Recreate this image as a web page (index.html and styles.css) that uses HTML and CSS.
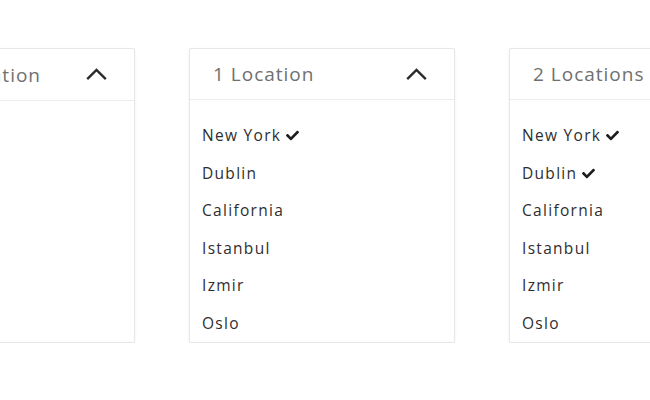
FILE: index.html
```html
<!DOCTYPE html>
<html lang="en">
<head>
    <meta charset="UTF-8">
    <meta name="viewport" content="width=device-width, initial-scale=1.0">
    <title>Location Dropdowns</title>
    <link rel="stylesheet" href="styles.css">
</head>
<body>
    <div class="row">
        <div class="dropdown">
            <div class="head">
                <span class="label">Select Location</span>
                <svg class="chevron" viewBox="0 0 24 14"><path d="M2 12 L12 2 L22 12"/></svg>
            </div>
            <ul class="list"></ul>
        </div>
        <div class="dropdown">
            <div class="head">
                <span class="label">1 Location</span>
                <svg class="chevron" viewBox="0 0 24 14"><path d="M2 12 L12 2 L22 12"/></svg>
            </div>
            <ul class="list">
                <li class="picked">New York <svg class="check" viewBox="0 0 512 512"><path d="M173.9 439.4l-166.4-166.4c-10-10-10-26.2 0-36.2l36.2-36.2c10-10 26.2-10 36.2 0L192 312.7 432.1 72.6c10-10 26.2-10 36.2 0l36.2 36.2c10 10 10 26.2 0 36.2l-294.4 294.4c-10 10-26.2 10-36.2 0z"/></svg></li>
                <li>Dublin</li>
                <li>California</li>
                <li>Istanbul</li>
                <li>Izmir</li>
                <li>Oslo</li>
            </ul>
        </div>
        <div class="dropdown">
            <div class="head">
                <span class="label">2 Locations</span>
                <svg class="chevron" viewBox="0 0 24 14"><path d="M2 12 L12 2 L22 12"/></svg>
            </div>
            <ul class="list">
                <li class="picked">New York <svg class="check" viewBox="0 0 512 512"><path d="M173.9 439.4l-166.4-166.4c-10-10-10-26.2 0-36.2l36.2-36.2c10-10 26.2-10 36.2 0L192 312.7 432.1 72.6c10-10 26.2-10 36.2 0l36.2 36.2c10 10 10 26.2 0 36.2l-294.4 294.4c-10 10-26.2 10-36.2 0z"/></svg></li>
                <li class="picked">Dublin <svg class="check" viewBox="0 0 512 512"><path d="M173.9 439.4l-166.4-166.4c-10-10-10-26.2 0-36.2l36.2-36.2c10-10 26.2-10 36.2 0L192 312.7 432.1 72.6c10-10 26.2-10 36.2 0l36.2 36.2c10 10 10 26.2 0 36.2l-294.4 294.4c-10 10-26.2 10-36.2 0z"/></svg></li>
                <li>California</li>
                <li>Istanbul</li>
                <li>Izmir</li>
                <li>Oslo</li>
            </ul>
        </div>
    </div>
</body>
</html>
```

FILE: styles.css
```css
body{
    margin: 0;
    background-color: #fff;
    font-family: "Open Sans", "Liberation Sans", sans-serif;
    overflow: hidden;
}
.row{
    display: flex;
    gap: 54px;
    margin-left: -131px;
    padding-top: 48px;
}
.dropdown{
    flex: 0 0 266px;
    height: 295px;
    box-sizing: border-box;
    border: 1px solid #e6e6e6;
    border-radius: 2px;
    box-shadow: 0 1px 3px rgba(0, 0, 0, 0.06);
    background: #fff;
    display: flex;
    flex-direction: column;
}
.head{
    height: 51px;
    display: flex;
    align-items: center;
    justify-content: space-between;
    padding: 0 26px 0 23px;
    border-bottom: 1px solid #ececec;
}
.label{
    font-size: 19px;
    color: #707070;
    letter-spacing: 1px;
}
.chevron{
    width: 23px;
    height: 13px;
    fill: none;
    stroke: #2a2a2a;
    stroke-width: 2.6;
}
.list{
    list-style: none;
    margin: 0;
    padding: 17px 0 0 12px;
}
.list li{
    height: 37.5px;
    line-height: 37.5px;
    font-size: 15.5px;
    letter-spacing: 1.3px;
    color: #2e2e2e;
    display: flex;
    align-items: center;
    gap: 5px;
}
.check{
    width: 13px;
    height: 13px;
    fill: #1e1e1e;
}
```
